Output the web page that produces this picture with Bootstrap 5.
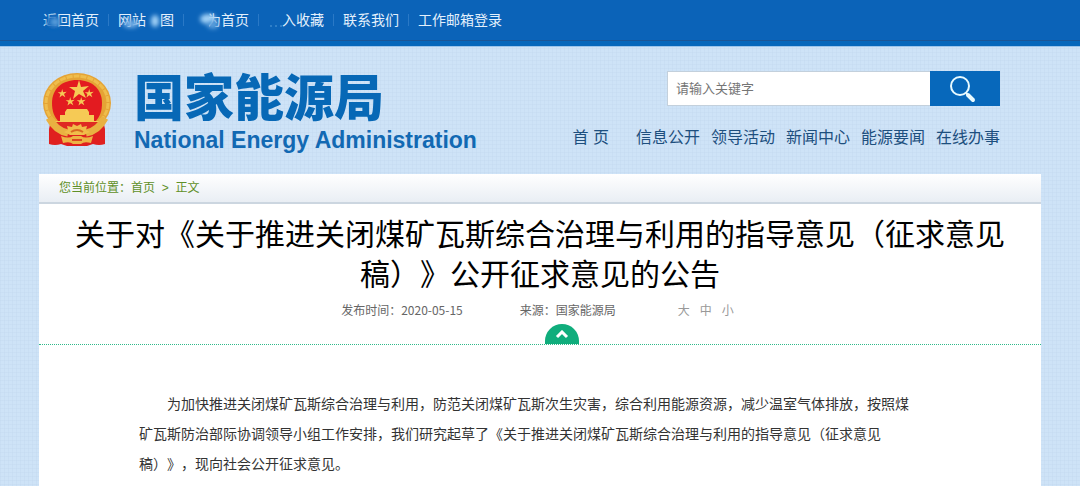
<!DOCTYPE html>
<html lang="zh-CN">
<head>
<meta charset="utf-8">
<meta name="viewport" content="width=device-width, initial-scale=1">
<title>国家能源局</title>
<link href="https://cdn.jsdelivr.net/npm/bootstrap@5.3.0/dist/css/bootstrap.min.css" rel="stylesheet">
<style>
  body { font-family: "Liberation Sans", "Noto Sans CJK SC", sans-serif; color: #333; background-color: #cee3f7;
    background-image: linear-gradient(#c4daf180 1px, transparent 1px), linear-gradient(90deg, #c4daf180 1px, transparent 1px);
    background-size: 4px 4px; text-spacing-trim: space-all; }
  a { color: inherit; text-decoration: none; }
  .page-wrap { max-width: 1002px; }
  .topbar { background: #0b63b8; border-bottom: 1px solid #9cc4ea; box-shadow: inset 0 -5px #0667bb, inset 0 -6px #1a5596; font-size: 14px; line-height: 41px; color: #e3f0fc; }
  .topbar ul { padding-bottom: 5px; }
  .topbar li { position: relative; }
  .topbar li + li { margin-left: 9px; padding-left: 10px; }
  .topbar li + li::before { content: ""; position: absolute; left: 0; top: 14px; height: 12px; border-left: 1px solid #2a79c6; }
  .smudge { position: absolute; pointer-events: none; top: 10px; left: 0; }
  .brand-cn { font: 900 50px/46px "Noto Sans CJK SC", sans-serif; color: #0768b6; }
  .brand-en { font: 700 23px/26px "Liberation Sans", sans-serif; color: #1269b3; white-space: nowrap; padding-top: 10px; }
  .brand-text { padding-left: 23px; }
  .site-head { padding-bottom: 21px; }
  .head-side { padding-right: 41px; }
  .search-box { width: 333px; height: 35px; margin-bottom: 20px; }
  .search-box input { font-size: 13px; border: 1px solid #c3d0dc; border-right: 0; padding: 0 8px; }
  .search-box input::placeholder { color: #757575; }
  .search-box button { width: 70px; background: #0768bb; }
  .search-box svg { margin-right: 7px; }
  .main-nav { font-size: 16px; line-height: 24px; color: #1d4f7e; gap: 11px; }
  .crumbs { font-size: 12px; line-height: 28px; color: #5f9028; background: linear-gradient(#fff, #e9eef4); border-bottom: 2px solid #ccd6e0; padding: 0 20px; }
  .article-title { font: 400 30px/40px "Noto Sans CJK SC", sans-serif; color: #000; padding: 8px 32px 0; }
  .meta { font-size: 12px; line-height: 18px; color: #666; font-family: "Noto Sans CJK SC", sans-serif; padding: 9px 5px 5px 0; }
  .source { margin: 0 62px 0 57px; }
  .sizes { gap: 10px; color: #999; }
  .fold { border-bottom: 1px dotted #2fb98a; padding-left: 43px; }
  .fold button { width: 34px; height: 20px; background: #10ad7c; border-radius: 17px 17px 0 0; }
  .article-text { font-size: 14px; line-height: 30px; color: #333; padding: 44px 130px 30px 100px; }
  .article-text p { text-indent: 2em; }
</style>
</head>
<body>
<div class="topbar">
  <div class="page-wrap mx-auto px-1">
    <ul class="list-unstyled d-flex mb-0">
      <li><a href="#">返回首页</a>
        <svg class="smudge" width="30" height="22"><defs><filter id="soft" x="-50%" y="-50%" width="200%" height="200%"><feGaussianBlur stdDeviation="2"/></filter></defs><ellipse cx="10" cy="12" rx="7" ry="7" fill="#0b63b8" filter="url(#soft)"/><ellipse cx="12" cy="12" rx="5" ry="4" fill="#5a9edb" filter="url(#soft)"/></svg></li>
      <li><a href="#">网站地图</a>
        <svg class="smudge" width="66" height="26"><rect x="38" y="0" width="14" height="22" fill="#0b63b8"/><ellipse cx="23" cy="14" rx="8" ry="4" fill="#6fabe3" filter="url(#soft)"/><ellipse cx="47" cy="11" rx="4" ry="6" fill="#a0d0f6" filter="url(#soft)"/></svg></li>
      <li><a href="#">设为首页</a>
        <svg class="smudge" width="56" height="26"><rect x="6" y="0" width="20" height="22" fill="#0b63b8"/><ellipse cx="25" cy="9" rx="8" ry="5" fill="#a0d0f6" filter="url(#soft)"/><ellipse cx="30" cy="15" rx="6" ry="4" fill="#5a9edb" filter="url(#soft)"/></svg></li>
      <li><a href="#">加入收藏</a>
        <svg class="smudge" width="40" height="26"><rect x="6" y="0" width="18" height="22" fill="#0b63b8"/><path d="M12 16h12" stroke="#2f7fc8" stroke-width="2" stroke-dasharray="2 3"/></svg></li>
      <li><a href="#">联系我们</a></li>
      <li><a href="#">工作邮箱登录</a></li>
    </ul>
  </div>
</div>

<header class="site-head page-wrap mx-auto d-flex justify-content-between flex-wrap">
  <a href="#" class="d-flex pt-4 ps-1">
    <svg width="68" height="76" viewBox="0 0 68 76" role="img" aria-label="国徽">
      <path d="M9 44 6 58v15q6 2 12 0l6 2h20l6-2q6 2 12 0V58l-3-14Z" fill="#e0201f"/>
      <ellipse cx="34" cy="32" rx="34" ry="30" fill="#e5a335"/>
      <ellipse cx="34" cy="32" rx="31" ry="27" fill="none" stroke="#efbd4c" stroke-width="3" stroke-dasharray="6 1"/>
      <path d="M34 9c15 0 25 9 25 23 0 8-2 13-6 18H15C11 45 9 40 9 32 9 18 19 9 34 9Z" fill="#e31b20"/>
      <g fill="#f6ca55">
        <path id="star" d="m36 9 2 7 8-1-6 5 3 7-7-4-6 5 2-8-6-4h8z"/>
        <use href="#star" transform="translate(3 14) scale(.45)"/>
        <use href="#star" transform="translate(30 14) scale(.45)"/>
        <use href="#star" transform="translate(11 22) scale(.45)"/>
        <use href="#star" transform="translate(22 22) scale(.45)"/>
        <path d="M24 38h20l2 3H22zM22 41h24v3h5v6H17v-6h5z"/>
        <path d="M11 50h46v2H11z"/>
      </g>
      <path d="M11 51h46v4q-8 8-23 9Q19 63 11 55Z" fill="#df2a22"/>
      <path d="M6 47q7 13 19 15M62 47q-7 13-19 15" fill="none" stroke="#e9b141" stroke-width="7"/>
      <path d="m21 61 4-2-1-4 5 1 1-3 4 2 4-2 1 3 5-1-1 4 4 2-6 3H27z" fill="#f0bd4a"/>
      <path d="M18 65q8 3 12 0h8q4 3 12 0l-2 7q-7-2-10 1h-8q-3-3-10-1z" fill="#edb345"/>
      <path d="M28 61q6-4 12 0" stroke="#d96a22" stroke-width="2" fill="none"/>
      <path d="M29 69h10" stroke="#d9481f" stroke-width="2"/>
    </svg>
    <span class="brand-text d-flex flex-column">
      <span class="brand-cn">国家能源局</span>
      <span class="brand-en">National Energy Administration</span>
    </span>
  </a>
  <div class="head-side d-flex flex-column align-items-end pt-4">
    <form class="search-box d-flex" role="search">
      <input class="flex-grow-1 rounded-0 bg-white" type="text" placeholder="请输入关键字" aria-label="请输入关键字">
      <button class="border-0 p-0" type="button" aria-label="搜索">
        <svg width="28" height="28" viewBox="0 0 28 28" fill="none" stroke="#e8faff"><circle cx="12" cy="11" r="9" stroke-width="2"/><path d="m18 18 3 3" stroke-width="2"/><path d="m20 20 5 5" stroke-width="4" stroke-linecap="round"/></svg>
      </button>
    </form>
    <nav class="main-nav d-flex">
      <a href="#" class="me-3">首 页</a><a href="#">信息公开</a><a href="#">领导活动</a><a href="#">新闻中心</a><a href="#">能源要闻</a><a href="#">在线办事</a>
    </nav>
  </div>
</header>

<main class="page-wrap mx-auto bg-white">
  <nav class="crumbs" aria-label="您当前位置">您当前位置：<a href="#">首页</a>&nbsp; &gt; &nbsp;<a href="#">正文</a></nav>
  <h1 class="article-title text-center mb-0">关于对《关于推进关闭煤矿瓦斯综合治理与利用的指导意见（征求意见稿）》公开征求意见的公告</h1>
  <div class="meta d-flex justify-content-center">
    <span>发布时间：2020-05-15</span><span class="source">来源：国家能源局</span>
    <span class="sizes d-flex"><a href="#">大</a><a href="#">中</a><a href="#">小</a></span>
  </div>
  <div class="fold d-flex justify-content-center">
    <button class="border-0 p-0 d-flex justify-content-center align-items-center" type="button" aria-label="收起">
      <svg width="14" height="9" viewBox="0 0 14 9" fill="none" stroke="#fff" stroke-width="3"><path d="m2 7 5-5 5 5"/></svg>
    </button>
  </div>
  <article class="article-text">
    <p class="mb-0">为加快推进关闭煤矿瓦斯综合治理与利用，防范关闭煤矿瓦斯次生灾害，综合利用能源资源，减少温室气体排放，按照煤矿瓦斯防治部际协调领导小组工作安排，我们研究起草了《关于推进关闭煤矿瓦斯综合治理与利用的指导意见（征求意见稿）》，现向社会公开征求意见。</p>
  </article>
</main>
<script src="https://cdn.jsdelivr.net/npm/bootstrap@5.3.0/dist/js/bootstrap.bundle.min.js"></script>
</body>
</html>
